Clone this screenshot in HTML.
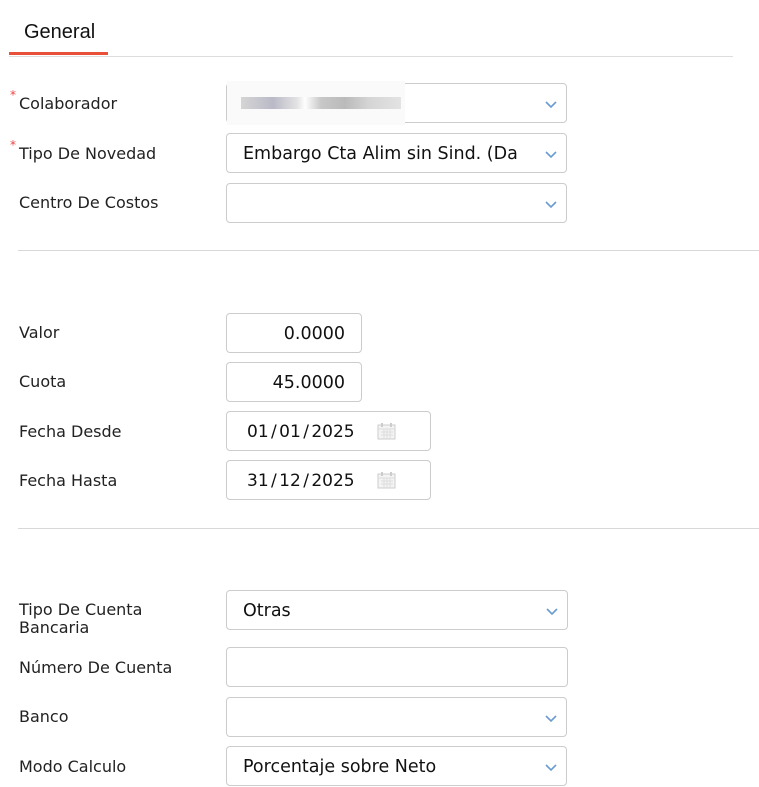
<!DOCTYPE html><html><head><style>
body{margin:0;width:759px;height:782px;overflow:hidden;background:#fff;font-family:"DejaVu Sans","Liberation Sans",sans-serif;color:#222;position:relative}
.a{position:absolute}
.lbl{position:absolute;left:19px;font-size:16px;color:#222}
.req::before{content:"*";color:#e44;position:absolute;left:-9px;top:-6px;font-size:12px}
.box{position:absolute;left:226px;border:1px solid #ccc;border-radius:4px;box-sizing:border-box;height:40px;background:#fff;font-size:17.5px;color:#111;line-height:40px;white-space:nowrap}
.dt{font-size:17px;word-spacing:-3px}
.chev{position:absolute;right:8px;top:15px;width:14px;height:10px}
.sep{position:absolute;left:18px;right:0;height:1px;background:#d8d8d8}
</style></head><body>
<div class="a" style="left:24px;top:21px;font-family:'Liberation Sans',sans-serif;font-size:20px;color:#111">General</div>
<div class="a" style="left:9px;top:52px;width:99px;height:3px;background:#e8503a"></div>
<div class="a" style="left:9px;top:56px;width:724px;height:1px;background:#ddd"></div>

<div class="lbl req" style="top:94px">Colaborador</div>
<div class="box" style="top:83px;width:341px"><div class="a" style="left:0;top:-3px;width:178px;height:44px;background:#fafafa"></div><div class="a" style="left:14px;top:13px;width:160px;height:12px;background:linear-gradient(90deg,#ccc,#aab 20%,#ddd 35%,#fff 40%,#bbb 50%,#aaa 65%,#ccc 80%,#ddd);opacity:.8"></div><svg class="chev" viewBox="0 0 14 10"><path d="M2 3l5 5 5-5" fill="none" stroke="#6b9bd1" stroke-width="1.6"/></svg></div>
<div class="lbl req" style="top:144px">Tipo De Novedad</div>
<div class="box" style="top:133px;width:341px;padding-left:16px;overflow:hidden">Embargo Cta Alim sin Sind. (Da<svg class="chev" viewBox="0 0 14 10"><path d="M2 3l5 5 5-5" fill="none" stroke="#6b9bd1" stroke-width="1.6"/></svg></div>
<div class="lbl" style="top:193px">Centro De Costos</div>
<div class="box" style="top:183px;width:341px"><svg class="chev" viewBox="0 0 14 10"><path d="M2 3l5 5 5-5" fill="none" stroke="#6b9bd1" stroke-width="1.6"/></svg></div>
<div class="sep" style="top:250px"></div>

<div class="lbl" style="top:323px">Valor</div>
<div class="box" style="top:313px;width:136px;text-align:right;padding-right:16px">0.0000</div>
<div class="lbl" style="top:372px">Cuota</div>
<div class="box" style="top:362px;width:136px;text-align:right;padding-right:16px">45.0000</div>
<div class="lbl" style="top:422px">Fecha Desde</div>
<div class="box dt" style="top:411px;width:205px;padding-left:20px">01 / 01 / 2025<svg class="a" style="left:150px;top:10px" width="20" height="18" viewBox="0 0 20 18"><rect x="1" y="3" width="17" height="14" fill="#f4f4f4" stroke="#ccc"/><path d="M1 7h17M4 10h12M4 13h12M7 7v10M10 7v10M13 7v10" stroke="#ddd"/><rect x="4" y="1" width="2" height="4" fill="#ccc"/><rect x="13" y="1" width="2" height="4" fill="#ccc"/></svg></div>
<div class="lbl" style="top:471px">Fecha Hasta</div>
<div class="box dt" style="top:460px;width:205px;padding-left:20px">31 / 12 / 2025<svg class="a" style="left:150px;top:10px" width="20" height="18" viewBox="0 0 20 18"><rect x="1" y="3" width="17" height="14" fill="#f4f4f4" stroke="#ccc"/><path d="M1 7h17M4 10h12M4 13h12M7 7v10M10 7v10M13 7v10" stroke="#ddd"/><rect x="4" y="1" width="2" height="4" fill="#ccc"/><rect x="13" y="1" width="2" height="4" fill="#ccc"/></svg></div>
<div class="sep" style="top:528px"></div>

<div class="lbl" style="top:601px;line-height:18px">Tipo De Cuenta<br>Bancaria</div>
<div class="box" style="top:590px;width:342px;padding-left:16px">Otras<svg class="chev" viewBox="0 0 14 10"><path d="M2 3l5 5 5-5" fill="none" stroke="#6b9bd1" stroke-width="1.6"/></svg></div>
<div class="lbl" style="top:658px">Número De Cuenta</div>
<div class="box" style="top:647px;width:342px"></div>
<div class="lbl" style="top:707px">Banco</div>
<div class="box" style="top:697px;width:341px"><svg class="chev" viewBox="0 0 14 10"><path d="M2 3l5 5 5-5" fill="none" stroke="#6b9bd1" stroke-width="1.6"/></svg></div>
<div class="lbl" style="top:757px">Modo Calculo</div>
<div class="box" style="top:746px;width:341px;padding-left:16px">Porcentaje sobre Neto<svg class="chev" viewBox="0 0 14 10"><path d="M2 3l5 5 5-5" fill="none" stroke="#6b9bd1" stroke-width="1.6"/></svg></div>
</body></html>
